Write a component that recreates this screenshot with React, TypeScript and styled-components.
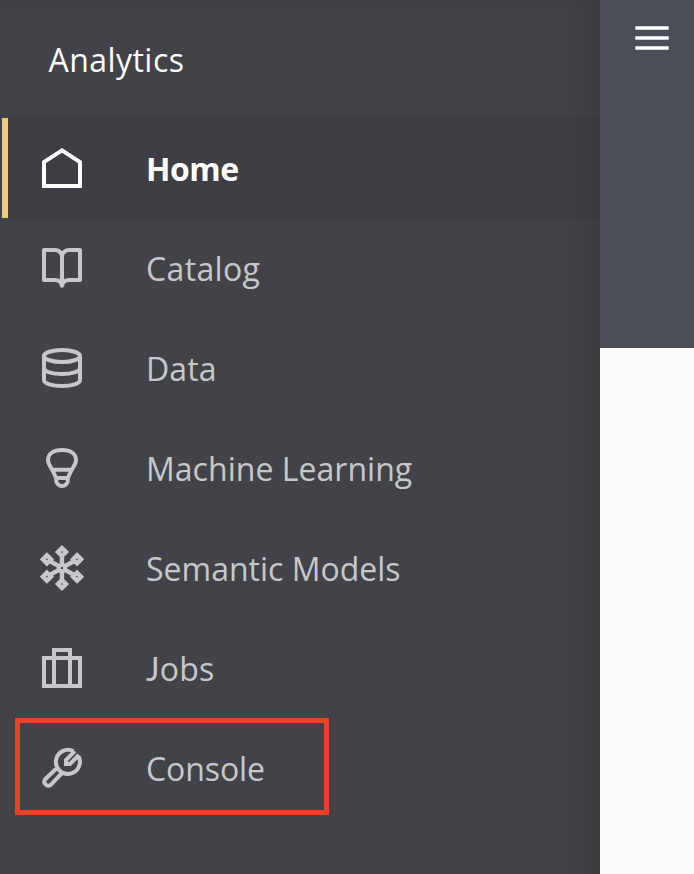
import React from "react";
import styled, { createGlobalStyle } from "styled-components";

const GlobalStyle = createGlobalStyle`
  body { margin: 0; background: #fdfcfa; }
`;

const Page = styled.div`
  display: flex;
  width: 694px;
  height: 874px;
  overflow: hidden;
  font-family: "Open Sans", "Noto Sans", sans-serif;
`;

const Sidebar = styled.nav`
  width: 600px;
  flex: none;
  background:
    linear-gradient(to right, transparent 564px, rgba(45, 45, 48, 0.12) 584px, rgba(45, 45, 48, 0.32) 600px),
    linear-gradient(to bottom, rgba(45, 45, 48, 0.12), transparent 14px),
    #424348;
`;

const Title = styled.h1`
  box-sizing: border-box;
  height: 118px;
  margin: 0;
  padding: 38px 0 0 48.5px;
  font-size: 32px;
  line-height: 44px;
  font-weight: 400;
  letter-spacing: 0.45px;
  color: #fff;
`;

const Menu = styled.ul`
  margin: 0;
  padding: 0 0 0 2px;
  list-style: none;
`;

const Item = styled.li<{ $active?: boolean }>`
  position: relative;
  box-sizing: border-box;
  display: flex;
  align-items: center;
  gap: 60px;
  height: 100px;
  padding-left: 30px;
  border-left: 6px solid ${(p) => (p.$active ? "#ebcf7d" : "transparent")};
  background: ${(p) => (p.$active ? "rgba(52, 54, 58, 0.3)" : "transparent")};
  background-clip: padding-box;
  color: ${(p) => (p.$active ? "#fff" : "#c7c8ca")};
  font-weight: ${(p) => (p.$active ? 700 : 400)};
`;

const Label = styled.span<{ $spacing: number }>`
  padding-top: 2px;
  font-size: 32px;
  line-height: 44px;
  white-space: nowrap;
  letter-spacing: ${(p) => p.$spacing}px;
`;

/* Label whose capital J rests on the baseline instead of descending. */
const BaselineInitialLabel = styled(Label)`
  &::first-letter {
    font-family: Lato, sans-serif;
  }
`;

const Icon = styled.svg`
  display: block;
  flex: none;
  width: 48px;
  height: 48px;
  fill: none;
  stroke: currentColor;
  stroke-width: 4;
`;

const Highlight = styled.div`
  position: absolute;
  top: 0.4px;
  left: 6.5px;
  box-sizing: border-box;
  width: 314px;
  height: 96.4px;
  border: 5px solid #ec4125;
`;

const Content = styled.main`
  flex: 1;
  background: #fdfcfa;
`;

const Banner = styled.header`
  display: flex;
  justify-content: center;
  align-items: flex-start;
  box-sizing: border-box;
  height: 348px;
  padding: 22px 0 0 10px;
  background: #4b4e56;
`;

const MenuButton = styled.button`
  display: flex;
  padding: 0;
  border: 0;
  background: none;
  color: #fff;
`;

const Bars = styled.svg`
  width: 40px;
  height: 32px;
  fill: currentColor;
`;

const nodes = [
  [24, 8],
  [39.1, 15.3],
  [39.1, 32.7],
  [24, 40],
  [8.9, 32.7],
  [8.9, 15.3],
];

const icons = {
  home: <path d="M24 6.4 42 18v24H6V18Z" />,
  catalog: (
    <path
      strokeLinejoin="round"
      d="M24 12C23 8 20.5 6 17 6H6v30h11c4 0 6.2 1.8 7 5.8C24.8 37.8 27 36 31 36h11V6H31c-3.5 0-6 2-7 6v29"
    />
  ),
  data: (
    <>
      <ellipse cx="24" cy="12" rx="18" ry="6" />
      <path d="M6 12v24c0 3.4 8 6 18 6s18-2.6 18-6V12M6 24c0 3.4 8 6 18 6s18-2.6 18-6" />
    </>
  ),
  bulb: (
    <path d="M24 6C15 6 10 10 10 16c0 5 4 8 6 13.500q1.200 2.500 2.200 4.500v2.200a5.800 5.800 0 0 0 11.600 0V34q1-2 2.200-4.500C34 24 38 21 38 16c0-6-5-10-14-10ZM14 25.700h20M18 34h12" />
  ),
  models: (
    <>
      {nodes.map(([x, y]) => (
        <path
          key={`${x}-${y}`}
          strokeWidth={4.4}
          d={`M${x} ${y - 4}l4 4-4 4-4-4ZM${x + (24 - x) * 0.25} ${y + (24 - y) * 0.25}L${24 - (24 - x) * 0.15} ${24 - (24 - y) * 0.15}`}
        />
      ))}
      <circle cx="24" cy="24" r="3.2" />
    </>
  ),
  jobs: <path d="M6 14h36v28H6ZM16 42V6h16v36" />,
  console: (
    <path d="M36.800 7.200 28 16v4h4l9-9M40.600 12.500A12 12 0 1 1 35.500 7.300M19.500 23.500 7.200 35.200a4 4 0 0 0 5.600 5.600L24.500 28.500" />
  ),
};

type Entry = {
  label: string;
  icon: keyof typeof icons;
  spacing: number;
  active?: boolean;
  marked?: boolean;
};

const entries: Entry[] = [
  { label: "Home", icon: "home", spacing: -0.5, active: true },
  { label: "Catalog", icon: "catalog", spacing: 0.35 },
  { label: "Data", icon: "data", spacing: 0.1 },
  { label: "Machine Learning", icon: "bulb", spacing: 0.03 },
  { label: "Semantic Models", icon: "models", spacing: 0 },
  { label: "Jobs", icon: "jobs", spacing: 0.2 },
  { label: "Console", icon: "console", spacing: -0.1, marked: true },
];

export default function App() {
  return (
    <>
      <GlobalStyle />
      <Page>
        <Sidebar>
          <Title>Analytics</Title>
          <Menu>
            {entries.map((e) => {
              const Text = e.label.startsWith("J") ? BaselineInitialLabel : Label;
              return (
                <Item key={e.label} $active={e.active}>
                  <Icon viewBox="0 0 48 48">{icons[e.icon]}</Icon>
                  <Text $spacing={e.spacing}>{e.label}</Text>
                  {e.marked && <Highlight />}
                </Item>
              );
            })}
          </Menu>
        </Sidebar>
        <Content>
          <Banner>
            <MenuButton aria-label="Menu">
              <Bars viewBox="0 0 40 32">
                <path d="M3.300 4.300h33.400v3.400h-33.400ZM3.300 14.300h33.400v3.400h-33.400ZM3.300 24.300h33.400v3.400h-33.400Z" />
              </Bars>
            </MenuButton>
          </Banner>
        </Content>
      </Page>
    </>
  );
}
